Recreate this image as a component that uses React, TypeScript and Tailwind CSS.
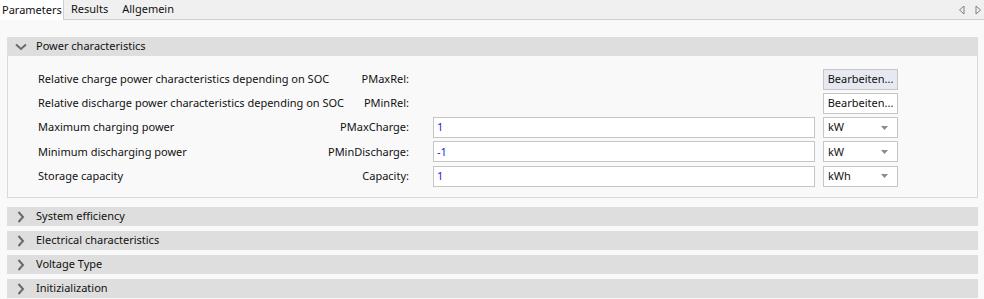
const font = { fontFamily: '"Noto Sans", "Open Sans", sans-serif' };

type Row = {
  label: string;
  param: string;
  value?: string;
  unit?: string;
};

const rows: Row[] = [
  { label: "Relative charge power characteristics depending on SOC", param: "PMaxRel:" },
  { label: "Relative discharge power characteristics depending on SOC", param: "PMinRel:" },
  { label: "Maximum charging power", param: "PMaxCharge:", value: "1", unit: "kW" },
  { label: "Minimum discharging power", param: "PMinDischarge:", value: "-1", unit: "kW" },
  { label: "Storage capacity", param: "Capacity:", value: "1", unit: "kWh" },
];

const collapsed = ["System efficiency", "Electrical characteristics", "Voltage Type", "Initizialization"];

function SectionHeader({ title, open }: { title: string; open?: boolean }) {
  return (
    <div className="flex h-[19px] items-center bg-[#dedede] pl-[8px] text-[#111]">
      <div className="flex w-[12px] justify-center">
        {open ? (
          <svg width="12" height="8" viewBox="0 0 12 8">
            <path d="M1 1.5 L6 6 L11 1.5" fill="none" stroke="#6a6a6a" strokeWidth="2" />
          </svg>
        ) : (
          <svg width="8" height="12" viewBox="0 0 8 12">
            <path d="M1.5 1 L6 6 L1.5 11" fill="none" stroke="#6a6a6a" strokeWidth="2" />
          </svg>
        )}
      </div>
      <span className="ml-[9px]">{title}</span>
    </div>
  );
}

export default function App() {
  return (
    <div className="h-[299px] w-[984px] overflow-hidden bg-[#f9f9f9] text-[11px] text-[#111]" style={font}>
      {/* tab strip */}
      <div className="flex h-[20px] items-stretch border-b border-[#cfcfcf] bg-[#f0f0f0]">
        <div className="-mb-px flex w-[64px] items-center border-r border-[#cfcfcf] bg-white pl-[2px]">Parameters</div>
        <div className="flex items-center pl-[7px]">Results</div>
        <div className="flex items-center pl-[14px]">Allgemein</div>
        <div className="ml-auto flex items-center gap-[10px] pr-[2px]">
          <svg width="7" height="10" viewBox="0 0 7 10">
            <path d="M6 1 L1.5 5 L6 9 Z" fill="none" stroke="#808080" />
          </svg>
          <svg width="7" height="10" viewBox="0 0 7 10">
            <path d="M1 1 L5.5 5 L1 9 Z" fill="none" stroke="#808080" />
          </svg>
        </div>
      </div>

      <div className="flex flex-col pl-[7px] pr-[6px] pt-[17px]">
        <SectionHeader title="Power characteristics" open />
        <div className="flex flex-col gap-[4.25px] border-x border-b border-[#d9d9d9] pb-[11px] pl-[30px] pt-[13px]">
          {rows.map((r) => (
            <div key={r.param} className="flex h-[20px] items-center whitespace-nowrap">
              <div className="flex w-[371px] items-center justify-between">
                <span>{r.label}</span>
                <span>{r.param}</span>
              </div>
              <div className="ml-[24px] w-[382px]">
                {r.value !== undefined && (
                  <div className="flex h-[21px] items-center border border-[#c6c6c6] bg-white px-[3px] text-[#1c1cf0]">
                    {r.value}
                  </div>
                )}
              </div>
              <div className="ml-[8px] w-[75px]">
                {r.unit ? (
                  <div className="flex h-[21px] items-center justify-between border border-[#c6c6c6] bg-white pl-[4px] pr-[9px]">
                    <span>{r.unit}</span>
                    <svg width="7" height="4" viewBox="0 0 7 4">
                      <path d="M0 0 L7 0 L3.5 4 Z" fill="#8a8a8a" />
                    </svg>
                  </div>
                ) : (
                  <div
                    className={`flex h-[21px] items-center justify-center border border-[#c6c6c6] ${
                      r.param === "PMaxRel:" ? "bg-[#e6e9f2]" : "bg-white"
                    }`}
                  >
                    Bearbeiten...
                  </div>
                )}
              </div>
            </div>
          ))}
        </div>

        <div className="mt-[9px] flex flex-col gap-[5px]">
          {collapsed.map((t) => (
            <SectionHeader key={t} title={t} />
          ))}
        </div>
      </div>
    </div>
  );
}
